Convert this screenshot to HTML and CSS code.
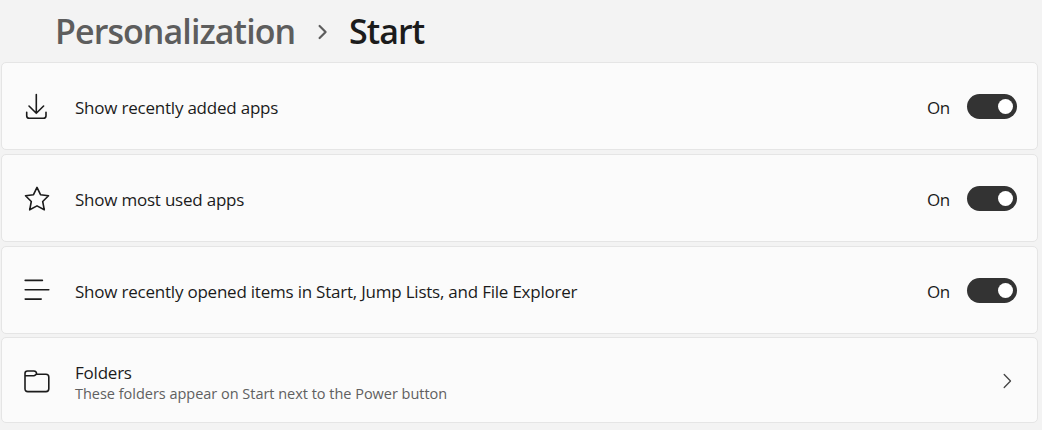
FILE: index.html
```
<!DOCTYPE html>
<html lang="en">
<head>
<meta charset="utf-8">
<title>Personalization - Start</title>
<link rel="stylesheet" href="styles.css">
</head>
<body>
<h1 class="breadcrumb">
  <span class="parent">Personalization</span>
  <svg class="separator" width="12" height="16" viewBox="0 0 12 16"><path d="M2.6 2 8.6 8l-6 6"/></svg>
  <span class="current">Start</span>
</h1>
<main class="settings">
  <section class="card">
    <svg class="icon" width="28" height="28" viewBox="0 0 28 28"><path d="M13.3 2.6v18.6M6 14l7.3 7.3 7.3-7.3M3.7 20.2v3.5c0 1.7.9 2.6 2.6 2.6h14.1c1.7 0 2.6-.9 2.6-2.6v-3.5"/></svg>
    <span class="label">Show recently added apps</span>
    <span class="state">On</span><span class="toggle"></span>
  </section>
  <section class="card">
    <svg class="icon" width="28" height="28" viewBox="0 0 28 28"><path d="M14 3.4l3.5 7.3 8 1.1-5.8 5.7 1.6 8.3-7.3-3.9-7.3 3.9 1.6-8.3-5.8-5.7 8-1.1z"/></svg>
    <span class="label">Show most used apps</span>
    <span class="state">On</span><span class="toggle"></span>
  </section>
  <section class="card">
    <svg class="icon" width="28" height="28" viewBox="0 0 28 28"><path d="M2.2 4.4h17.2M2.2 13.7h23.6M2.2 23.1h16"/></svg>
    <span class="label">Show recently opened items in Start, Jump Lists, and File Explorer</span>
    <span class="state">On</span><span class="toggle"></span>
  </section>
  <section class="card folders">
    <svg class="icon" width="28" height="28" viewBox="0 0 28 28"><path d="M2 9.7V7.4C2 5.8 2.9 5 4.5 5h6.3c1.4 0 2.8 1.3 2.8 3.2h9.4c1.8 0 2.8 1 2.8 2.8v11.8c0 1.8-1 2.8-2.8 2.8H4.8C3 25.6 2 24.6 2 22.8V9.7h8.8c1.5 0 1.8-1.5 2.8-1.5"/></svg>
    <div class="copy">
      <span class="label">Folders</span>
      <span class="detail">These folders appear on Start next to the Power button</span>
    </div>
    <svg class="chevron" width="10" height="16" viewBox="0 0 10 16"><path d="M1.2 2.5 7.5 9l-6.3 6.5"/></svg>
  </section>
</main>
</body>
</html>
```
FILE: styles.css
```
* { box-sizing: border-box; }
body {
  margin: 0;
  width: 1042px;
  height: 430px;
  overflow: hidden;
  background: #f3f3f3;
  color: #1b1b1b;
  font-family: "Open Sans", "Noto Sans", sans-serif;
}
svg { display: block; flex: none; overflow: visible; fill: none; stroke: #1b1b1b; stroke-width: 1.6; stroke-linecap: round; stroke-linejoin: round; }
.breadcrumb {
  display: flex;
  align-items: center;
  height: 62px;
  margin: 0;
  padding-left: 55px;
  font-size: 34px;
  font-weight: 600;
  letter-spacing: -0.92px;
  line-height: 62px;
  white-space: nowrap;
}
.parent { width: 240px; color: #5d5d5d; }
.separator { margin: 2px 20px 0 22px; stroke: #5d5d5d; stroke-width: 2.2; }
.settings { display: flex; flex-direction: column; gap: 4px; padding: 0 4px 0 1px; }
.card {
  display: flex;
  align-items: center;
  height: 88px;
  padding: 0 20px 0 21px;
  background: #fbfbfb;
  border: 1px solid #e5e5e5;
  border-radius: 5px;
}
.icon { margin-right: 24px; }
.label { padding-top: 3px; font-size: 17px; letter-spacing: -0.22px; line-height: 24px; white-space: nowrap; }
.state { margin-left: auto; margin-right: 17px; padding-top: 2px; font-size: 17px; letter-spacing: -0.3px; }
.toggle {
  display: flex;
  align-items: center;
  justify-content: flex-end;
  width: 50px;
  height: 25px;
  padding-right: 4px;
  border-radius: 13px;
  background: #333;
}
.toggle::after { content: ""; width: 15px; height: 15px; border-radius: 50%; background: #fff; }
.copy { display: flex; flex-direction: column; }
.detail { font-size: 14.5px; letter-spacing: -0.02px; line-height: 18px; color: #606060; white-space: nowrap; }
.folders { height: 86px; margin-top: -1px; }
.chevron { margin-left: auto; margin-right: 4px; stroke: #444; stroke-width: 1.3; }
```
